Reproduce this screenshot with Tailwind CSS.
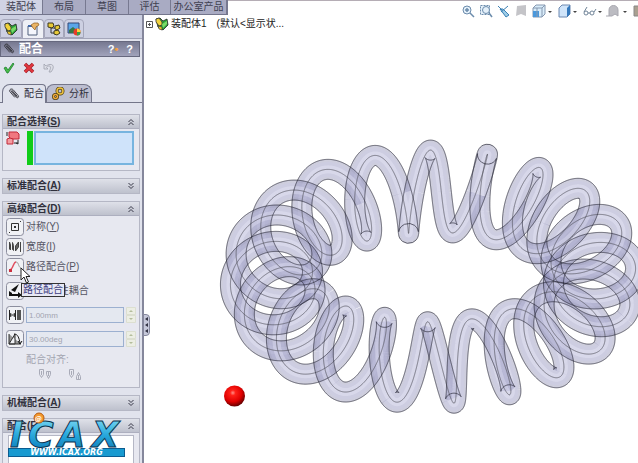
<!DOCTYPE html>
<html lang="zh-CN">
  <head>
    <meta charset="UTF-8" />
    <title>装配体1</title>
    <script src="https://cdn.jsdelivr.net/npm/@tailwindcss/browser@4"></script>
  </head>
  <body class="bg-white h-screen overflow-hidden flex flex-col text-[10px] leading-[12px] text-[#30303c] font-['Liberation_Sans','Noto_Sans_CJK_SC',sans-serif]">
    <!-- shared icons -->
    <svg class="absolute size-0">
      <defs>
        <symbol id="clip" viewBox="0 0 14 14">
          <path d="M3 3l7 8c1 1 3 0 2-2L6 2C4 0 1 2 2 4l6 7M5 4l5 6M4 2l7 8" fill="none" stroke="#383840" stroke-width="1.1" />
        </symbol>
        <symbol id="assembly" viewBox="0 0 14 14">
          <path d="M1 2l4-1 3 3 4-2 1 6-5 5-5-3z" fill="#2da43a" stroke="#222" stroke-width=".8" />
          <path d="M1 2l3-1 3 4v3L4 9 1 5z" fill="#f1d23c" stroke="#333" stroke-width=".8" />
          <path d="M7 7l5-3v3L8 11z" fill="#7ada68" />
          <path d="M3 9l4 1v3L4 12z" fill="#e8c52c" stroke="#333" stroke-width=".6" />
        </symbol>
        <symbol id="up" viewBox="0 0 8 8">
          <path d="M1.500 4L4 1.500 6.500 4M1.500 7L4 4.500 6.500 7" fill="none" stroke="#383848" />
        </symbol>
        <symbol id="down" viewBox="0 0 8 8">
          <path d="M1.500 1L4 3.500 6.500 1M1.500 4L4 6.500 6.500 4" fill="none" stroke="#383848" />
        </symbol>
        <symbol id="spin" viewBox="0 0 10 16">
          <path d="M.5.500h9v7h-9zM.5 8.500h9v7h-9z" fill="#eceee4" stroke="#dcdfd0" />
          <path d="M3 5l2-2 2 2zM3 11l2 2 2-2z" fill="#b4bd9c" />
        </symbol>
        <radialGradient id="ball" cx=".42" cy=".35" r=".65">
          <stop offset="0" stop-color="#ff9088" />
          <stop offset=".2" stop-color="#ff2018" />
          <stop offset=".65" stop-color="#e00000" />
          <stop offset="1" stop-color="#600" />
        </radialGradient>
      </defs>
    </svg>

    <header class="flex h-[15px] shrink-0">
      <nav class="flex shrink-0 bg-[#a9abc3] text-[#404050] border-b border-[#73758c]">
        <button class="w-[43px] bg-[#d0d3e4] border-r border-[#777990]">装配体</button>
        <button class="w-[43px] border-r border-[#777990]">布局</button>
        <button class="w-[43px] border-r border-[#777990]">草图</button>
        <button class="w-[42px] border-r border-[#777990]">评估</button>
        <button class="w-[57px] border-r-2 border-[#777990]">办公室产品</button>
      </nav>
      <div class="grow min-w-0 flex justify-end border-t border-[#b5adb5]">
        <!-- view toolbar -->
        <svg class="mt-[3px] w-44 h-4 shrink-0" viewBox="0 0 176 16">
          <g fill="#e4f0fa" stroke="#6c8cac">
            <circle cx="5" cy="6" r="4" /><path d="M8 9l4 4M3 6h4M5 4v4" stroke-width="1.500" />
            <path d="M18.500 1.500h9v9h-9z" stroke-dasharray="2 1" /><circle cx="24" cy="6" r="3.500" /><path d="M27 9l3 4" stroke-width="1.500" />
          </g>
          <path d="M36 2l4 4M39 8l7-6M38 5l6 8 3-2-6-6z" fill="#9ccde8" stroke="#3c80b4" />
          <path d="M55 2l9-1v11l-5-2-5 2z" fill="#c4c4c8" />
          <path d="M71 4l3-3h9v9l-3 3h-9z" fill="#d8ecfa" stroke="#8698b0" /><path d="M71 7h6v6h-6z" fill="#4a98dc" /><path d="M71 4h9v9M80 4l3-3M75 4v9" fill="none" stroke="#8698b0" />
          <path d="M97 4l3-3h8v9l-3 3h-8z" fill="#cfe4fa" stroke="#6c88b0" /><path d="M105 4l3-3v9l-3 3z" fill="#3478bc" />
          <g fill="none" stroke="#708498"><circle cx="124" cy="9" r="2" /><circle cx="130" cy="9" r="2" /><path d="M122 8l3-5M126 9h2M132 8l2-3" /></g>
          <path d="M147 12V6c0-6 9-6 9 0v6l-3-2-3 2zM144 12h3" fill="#bcbcc2" stroke="#a8a8b0" />
          <path d="M172 2h6v10h-6z" fill="#aaa090" stroke="#888" />
          <path d="M86 7h4l-2 2zM111 7h4l-2 2zM136 7h4l-2 2zM161 7h4l-2 2z" fill="#444" />
        </svg>
      </div>
    </header>

    <div class="flex grow min-h-0">
      <aside class="relative w-36 shrink-0 bg-[#e1e3ed] border-r-2 border-[#85879c]">
        <div class="flex h-6 pt-1 bg-[#cdd0e2] border-b border-[#a4a6ba]">
          <button class="w-[22px] flex items-center justify-center border border-[#a4a6ba] rounded-t" aria-label="设计树">
            <svg class="size-[14px]"><use href="#assembly" /></svg>
          </button>
          <button class="w-[22px] flex items-center justify-center bg-[#eef0f6] border border-b-0 border-[#a4a6ba] rounded-t" aria-label="属性">
            <svg class="size-[14px]" viewBox="0 0 14 14">
              <path d="M2 4h9v9H2z" fill="#f4f6fc" stroke="#50607c" />
              <path d="M2 4h9" stroke="#4068a8" stroke-width="2" />
              <path d="M5 3l3-2h4l1 2-3 2-1 3-2-2z" fill="#eab464" stroke="#8c5c20" stroke-width=".7" />
            </svg>
          </button>
          <button class="w-[20px] flex items-center justify-center border border-[#a4a6ba] rounded-t" aria-label="配置">
            <svg class="size-[14px]" viewBox="0 0 14 14">
              <path d="M4 3v8h6M4 6h6" fill="none" stroke="#333" />
              <path d="M1 1h5l1 3-2 2-4-1zM8 4l4-1 1 3-3 2-2-1zM7 9l4-1 2 3-3 2-3-1z" fill="#e8ca38" stroke="#3c3820" />
            </svg>
          </button>
          <button class="w-[20px] flex items-center justify-center border border-[#a4a6ba] rounded-t" aria-label="外观">
            <svg class="size-[14px]" viewBox="0 0 14 14">
              <path d="M1 1h11v10H1z" fill="#5aa6e8" stroke="#334878" />
              <path d="M2 8l4-3 6 5v1H2z" fill="#347848" />
              <circle cx="10" cy="10" r="3.500" fill="#e83c28" />
              <path d="M10 10V6.500A3.500 3.500 0 0 1 13.500 10z" fill="#ffd23c" />
              <path d="M10 10h3.500A3.500 3.500 0 0 1 10 13.500z" fill="#38a048" />
            </svg>
          </button>
        </div>

        <div class="mt-[2px] mr-[2px] h-4 flex items-center gap-1 px-[2px] bg-linear-to-b from-[#777991] to-[#a1a3bb] border border-[#66687e] text-white font-bold">
          <svg class="size-3 shrink-0"><use href="#clip" /></svg>
          <h1 class="text-[12px] grow">配合</h1>
          <button class="text-[11px]" aria-label="新增功能">?<span class="text-[#f4a040]">•</span></button>
          <button class="text-[11px] px-1">?</button>
        </div>

        <div class="flex items-center gap-2 h-[22px] px-[3px]">
          <button aria-label="确定">
            <svg class="size-3" viewBox="0 0 12 12"><path d="M1 6l2-1 2 3 5-7 1 1-6 9H4z" fill="#48bd48" stroke="#208030" stroke-width=".8" /></svg>
          </button>
          <button aria-label="取消">
            <svg class="size-3" viewBox="0 0 12 12"><path d="M2 2l8 8M10 2l-8 8" stroke="#9c2028" stroke-width="3.500" /><path d="M2 2l8 8M10 2l-8 8" stroke="#e43840" stroke-width="2" /></svg>
          </button>
          <button aria-label="撤销">
            <svg class="size-3" viewBox="0 0 12 12"><path d="M1 2v5h4L3.500 5.500C7 2 9 5 6 10h2c5-6 1-10-5-6z" fill="#dcdee6" stroke="#a0a2ae" stroke-width=".8" /></svg>
          </button>
        </div>

        <div class="mt-[5px] h-[19px] pl-[2px] flex border-b border-[#74768a]">
          <button class="-mb-px w-11 flex items-center gap-1 pl-[5px] bg-[#e1e3ed] border border-b-0 border-[#74768a] rounded-tl-lg rounded-tr">
            <svg class="size-3 shrink-0"><use href="#clip" /></svg>配合
          </button>
          <button class="w-[46px] flex items-center gap-1 pl-[5px] bg-[#bcbed0] border border-b-0 border-[#74768a] rounded-t-lg">
            <svg class="size-[13px] shrink-0" viewBox="0 0 13 13">
              <circle cx="8" cy="4" r="3" fill="none" stroke="#4c3c10" stroke-width="3" /><circle cx="8" cy="4" r="3" fill="none" stroke="#f0c440" stroke-width="1.500" />
              <circle cx="3.500" cy="9.500" r="2" fill="none" stroke="#4c3c10" stroke-width="3" /><circle cx="3.500" cy="9.500" r="2" fill="none" stroke="#eba83c" stroke-width="1.500" />
            </svg>分析
          </button>
        </div>

        <div class="pt-[11px] px-[2px] flex flex-col gap-[7px]">
          <section class="border border-[#b5b7c5] bg-[#e7e8f0]">
            <h2 class="flex items-center justify-between h-[14px] px-1 font-bold bg-linear-to-b from-[#dfe1e9] to-[#bec1cd] border-b border-[#adafbf]"><span>配合选择(<u>S</u>)</span><svg class="size-2"><use href="#up" /></svg></h2>
            <div class="flex pt-[2px] pb-[5px] pl-[3px] pr-[5px]">
              <svg class="w-[14px] h-[15px] shrink-0" viewBox="0 0 14 15">
                <path d="M3 1h8l2 2v5H5L3 6z" fill="#f07880" stroke="#c02838" />
                <path d="M1 8l3-1 3 1v5H1z" fill="#f49ca0" stroke="#c02838" />
                <path d="M1 1v4M8 12h4M12 9v4l-2-1" stroke="#222" fill="none" />
              </svg>
              <span class="ml-[7px] w-2 bg-[#10cc18]"></span>
              <textarea readonly aria-label="配合选择" class="ml-px grow min-w-0 h-[34px] resize-none bg-[#cfe3fa] border-2 border-[#77b4df]"></textarea>
            </div>
          </section>

          <section class="border border-[#b5b7c5]">
            <h2 class="flex items-center justify-between h-[14px] px-1 font-bold bg-linear-to-b from-[#dfe1e9] to-[#bec1cd]"><span>标准配合(<u>A</u>)</span><svg class="size-2"><use href="#down" /></svg></h2>
          </section>

          <section class="relative border border-[#b5b7c5] bg-[#e7e8f0]">
            <h2 class="flex items-center justify-between h-[14px] px-1 font-bold bg-linear-to-b from-[#dfe1e9] to-[#bec1cd] border-b border-[#adafbf]"><span>高级配合(<u>D</u>)</span><svg class="size-2"><use href="#up" /></svg></h2>
            <div class="flex flex-col gap-[2px] pt-[2px] px-[3px] text-[#555563]">
              <button class="flex items-center gap-[2px] h-[18px]">
                <svg class="size-[18px]" viewBox="0 0 18 18"><rect x=".5" y=".5" width="17" height="17" rx="3" fill="#f0f1f5" stroke="#8c8e9e" /><path d="M5.500 5.500h7v7h-7zM3 15l1-1M14 4l1-1" fill="none" stroke="#333" /><path d="M8 8h2v2H8z" fill="#333" /></svg>
                <span>对称(<u>Y</u>)</span>
              </button>
              <button class="flex items-center gap-[2px] h-[18px]">
                <svg class="size-[18px]" viewBox="0 0 18 18"><rect x=".5" y=".5" width="17" height="17" rx="3" fill="#f0f1f5" stroke="#8c8e9e" /><path d="M3.500 4l1 3v5l-1-1zM6.500 4.500l1 3v5l-1-1zM9.500 13V8l3-4v5zM14.500 4v10" fill="#666" stroke="#444" /></svg>
                <span>宽度(<u>I</u>)</span>
              </button>
              <button class="flex items-center gap-[2px] h-[18px]">
                <svg class="size-[18px]" viewBox="0 0 18 18"><rect x=".5" y=".5" width="17" height="17" rx="3" fill="#f0f1f5" stroke="#8c8e9e" /><path d="M3 12c4 1 4-8 7-8" fill="none" stroke="#e05060" stroke-width="1.500" /><path d="M10 4c3 0 2 5 5 6" fill="none" stroke="#999" /><path d="M3 11h3v3H3z" fill="#cc3040" /></svg>
                <span>路径配合(<u>P</u>)</span>
              </button>
              <button class="mt-1 flex items-center gap-[2px] h-[18px]">
                <svg class="size-[18px]" viewBox="0 0 18 18"><rect x=".5" y=".5" width="17" height="17" rx="3" fill="#f0f1f5" stroke="#8c8e9e" /><path d="M13 2L5 8l4 2zM3 9l3 2v1h6v-2l4 3-4 3v-2H3z" fill="#111" /></svg>
                <span>线性/线性耦合</span>
              </button>
              <div class="mt-1 flex items-center gap-[2px] h-[18px]">
                <svg class="size-[18px] shrink-0" viewBox="0 0 18 18"><rect x=".5" y=".5" width="17" height="17" rx="3" fill="#f0f1f5" stroke="#8c8e9e" /><path d="M3.500 4v10M9.500 4v10M4 9h5M5 7L4 9l1 2M8 7l1 2-1 2" fill="none" stroke="#222" /><path d="M11 4h4v10h-4z" fill="#555" /></svg>
                <input aria-label="距离" disabled value="1.00mm" class="min-w-0 grow h-4 px-[2px] text-[8px] text-[#a3a5b0] border border-[#9cb0d0] bg-[#e4e8f0]" />
                <svg class="w-[10px] h-4 shrink-0"><use href="#spin" /></svg>
              </div>
              <div class="mt-1 flex items-center gap-[2px] h-[18px]">
                <svg class="size-[18px] shrink-0" viewBox="0 0 18 18"><rect x=".5" y=".5" width="17" height="17" rx="3" fill="#f0f1f5" stroke="#8c8e9e" /><path d="M3 14L9 4v10zM3 4v10h12" fill="#999" stroke="#333" /><path d="M8 4c4 0 5 4 6 9M12 11l2 3 2-3" fill="none" stroke="#111" /></svg>
                <input aria-label="角度" disabled value="30.00deg" class="min-w-0 grow h-4 px-[2px] text-[8px] text-[#a3a5b0] border border-[#9cb0d0] bg-[#e4e8f0]" />
                <svg class="w-[10px] h-4 shrink-0"><use href="#spin" /></svg>
              </div>
              <div class="pl-5 pt-1 text-[#a3a5b0]">配合对齐:</div>
              <div class="flex gap-4 pl-8 pb-[6px]">
                <button disabled aria-label="同向对齐">
                  <svg class="w-[14px] h-[13px]" viewBox="0 0 14 13"><path d="M1.500 1.500h4v5l-2 3-2-3zM8.500 3.500h4v3l-2 4-2-4zM3.500 3v4M10.500 4v4" fill="none" stroke="#a9abb8" /></svg>
                </button>
                <button disabled aria-label="反向对齐">
                  <svg class="w-[14px] h-[13px]" viewBox="0 0 14 13"><path d="M1.500 1.500h4v5l-2 3-2-3zM8.500 11.500h4v-3l-2-4-2 4zM3.500 3v4M10.500 7v4" fill="none" stroke="#a9abb8" /></svg>
                </button>
              </div>
            </div>
            <!-- tooltip and pointer -->
            <div class="absolute left-[18px] top-[81px] h-[14px] px-px border border-[#333] bg-[#e7e8f4] text-[#404080] whitespace-nowrap">路径配合</div>
            <svg class="absolute left-[17px] top-[65px] w-[11px] h-[17px]" viewBox="0 0 11 17"><path d="M1 1v12l3-3 2.500 6 2-1L6 9.500h4z" fill="#fff" stroke="#222" /></svg>
          </section>

          <section class="border border-[#b5b7c5]">
            <h2 class="flex items-center justify-between h-[14px] px-1 font-bold bg-linear-to-b from-[#dfe1e9] to-[#bec1cd]"><span>机械配合(<u>A</u>)</span><svg class="size-2"><use href="#down" /></svg></h2>
          </section>

          <section class="relative border border-[#b5b7c5] bg-[#e7e8f0]">
            <h2 class="flex items-center justify-between h-[14px] px-1 font-bold bg-linear-to-b from-[#dfe1e9] to-[#bec1cd] border-b border-[#adafbf]"><span>配合(<u>E</u>)</span><svg class="size-2"><use href="#up" /></svg></h2>
            <div class="mt-[2px] mx-[5px] h-12 bg-white border border-[#b5b7c5]"></div>
            <!-- watermark -->
            <div class="absolute left-[5px] -top-[6px] w-[117px] italic font-bold font-['DejaVu_Sans',sans-serif]">
              <svg class="w-full h-[35px] overflow-visible" viewBox="0 0 117 35">
                <defs>
                  <linearGradient id="ice" x2="0" y2="1">
                    <stop offset="0" stop-color="#88e0f8" />
                    <stop offset=".5" stop-color="#28a8dc" />
                    <stop offset="1" stop-color="#0870b0" />
                  </linearGradient>
                </defs>
                <g font-size="35" fill="url(#ice)" stroke="#0b3450" stroke-width="1">
                  <text x="2" y="34">I</text>
                  <text x="20" y="34">C</text>
                  <text x="50" y="34">A</text>
                  <text x="84" y="34">X</text>
                </g>
                <circle cx="31" cy="5" r="5" fill="#f49a30" stroke="#b85c10" />
                <text x="27" y="8" font-size="7" fill="#fff">@</text>
              </svg>
              <div class="h-[9px] border border-[#0b5c90] bg-[#189ad0] text-center text-white text-[8px] leading-[7px]">WWW.ICAX.ORG</div>
            </div>
          </section>
        </div>

        <button aria-label="折叠面板" class="absolute -right-[8px] top-[299px] w-[7px] h-[22px] bg-[#c6c8da] border border-[#85879c] rounded-r">
          <svg class="w-[5px] h-5" viewBox="0 0 5 20"><path d="M4 2v4L1 4zM4 8v4l-3-2zM4 14v4l-3-2z" fill="#333344" /></svg>
        </button>
      </aside>

      <main class="grow min-w-0">
        <div class="flex items-start h-[25px]">
          <div class="flex items-center h-[18px] pl-[2px] gap-[2px] text-[#222] whitespace-nowrap">
            <svg class="size-[7px]" viewBox="0 0 7 7"><path d="M.5.500h6v6h-6zM2 3.500h3M3.500 2v3" fill="#fff" stroke="#555" /></svg>
            <svg class="size-[14px]"><use href="#assembly" /></svg>
            <span>装配体1</span>
            <span class="pl-2">(默认&lt;显示状...</span>
          </div>
        </div>
        <svg class="w-full" viewBox="144 40 494 423" aria-label="弹簧模型">
          <g id="coil" fill="none"></g>
          <circle cx="234.500" cy="396" r="10.500" fill="url(#ball)" />
        </svg>
      </main>
    </div>

    <script>
      // toroidal spring, seen from above at an angle
      const R = 162;
      const r = 41;
      const turns = 20;
      const tube = 10;
      const steps = 300;
      const start = (91.25 * Math.PI) / 180;

      function project(t) {
        const phi = (58 * Math.PI) / 180 + turns * (start - t);
        const rho = R + r * Math.cos(phi);
        const up = rho * Math.sin(t) * 0.53 + r * Math.sin(phi) * 0.85;
        return [433 + rho * Math.cos(t) + up * 0.012, 277 - up];
      }

      function offset(t, d) {
        const [x, y] = project(t);
        const [x1, y1] = project(t - 0.0001);
        const [x2, y2] = project(t + 0.0001);
        const len = Math.hypot(x2 - x1, y2 - y1) || 1;
        return [x - ((y2 - y1) / len) * d, y + ((x2 - x1) / len) * d];
      }

      function trace(from, to, n, d) {
        let path = "";
        for (let i = 0; i <= n; i++) {
          const [x, y] = offset(from + ((to - from) * i) / n, d);
          path += (i ? "L" : "M") + x.toFixed(2) + " " + y.toFixed(2);
        }
        return path;
      }

      function line(path, color, width) {
        return `<path d="${path}" stroke="${color}" stroke-width="${width}" stroke-linejoin="round" />`;
      }

      let body = "";
      const half = Math.PI / turns;
      for (let i = 0; i < turns * 2; i++) {
        const from = start + half / 2 + i * half;
        const path = trace(from, from + half, steps, 0);
        body += line(path, "rgba(112,112,155,0.34)", tube * 2);
        body += line(path, "rgba(205,205,242,0.22)", tube * 1.5);
        body += line(path, "rgba(238,238,255,0.32)", tube * 0.8);
      }
      const full = [start, start + Math.PI * 2, turns * steps * 2];
      body += line(trace(...full, 0), "rgba(80,80,90,0.7)", 1);
      body += line(trace(...full, tube), "rgba(32,32,48,0.85)", 0.8);
      body += line(trace(...full, -tube), "rgba(32,32,48,0.85)", 0.8);
      document.getElementById("coil").innerHTML = body;
    </script>
  </body>
</html>
